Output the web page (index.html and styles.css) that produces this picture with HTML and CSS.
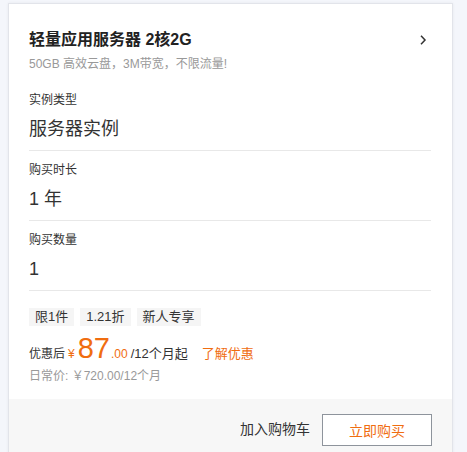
FILE: index.html
```html
<!DOCTYPE html>
<html lang="zh">
<head>
<meta charset="utf-8">
<link rel="stylesheet" href="styles.css">
</head>
<body>
<div class="card">
  <div class="body">
    <div class="head">
      <div class="title">轻量应用服务器 2核2G</div>
      <svg class="chev" width="10" height="12" viewBox="0 0 10 12"><path d="M3 1.8 L7 6 L3 10.2" fill="none" stroke="#333" stroke-width="1.5"/></svg>
    </div>
    <div class="sub">50GB 高效云盘，3M带宽，不限流量!</div>
    <div class="field first">
      <div class="label">实例类型</div>
      <div class="value">服务器实例</div>
    </div>
    <div class="field">
      <div class="label">购买时长</div>
      <div class="value">1 年</div>
    </div>
    <div class="field">
      <div class="label">购买数量</div>
      <div class="value">1</div>
    </div>
    <div class="tags">
      <span class="tag">限1件</span>
      <span class="tag">1.21折</span>
      <span class="tag">新人专享</span>
    </div>
    <div class="price">
      <span class="pl">优惠后</span>
      <span class="cur">¥</span>
      <span class="big">87</span>
      <span class="dec">.00</span>
      <span class="unit">/12个月起</span>
      <span class="more">了解优惠</span>
    </div>
    <div class="orig">日常价: ￥720.00/12个月</div>
  </div>
  <div class="foot">
    <span class="cart">加入购物车</span>
    <button class="buy">立即购买</button>
  </div>
</div>
</body>
</html>
```
FILE: styles.css
```css
html, body {
  margin: 0;
  padding: 0;
  background: #f4f6fb;
  font-family: "Liberation Sans", "Noto Sans CJK SC", sans-serif;
  color: #333;
  overflow: hidden;
}
body {
  padding: 3px 0 0 8px;
}
.card {
  width: 443px;
  background: #fff;
  border: 1px solid #e2e4ea;
  box-shadow: 0 0 3px rgba(0,0,0,0.06);
}
.body {
  padding: 25px 21px 0 20px;
}
.head {
  display: flex;
  align-items: center;
  justify-content: space-between;
  height: 22px;
}
.title {
  font-size: 16px;
  font-weight: bold;
  color: #222;
  line-height: 22px;
}
.chev {
  margin-right: 3px;
}
.sub {
  margin-top: 4px;
  font-size: 12px;
  line-height: 18px;
  color: #999;
}
.field {
  padding-top: 10px;
  padding-bottom: 8px;
  border-bottom: 1px solid #e8e8e8;
}
.field.first {
  padding-top: 18px;
}
.label {
  font-size: 12px;
  line-height: 18px;
  color: #333;
}
.value {
  margin-top: 7px;
  font-size: 18px;
  line-height: 26px;
  color: #333;
}
.tags {
  display: flex;
  gap: 6px;
  margin-top: 17px;
}
.tag {
  background: #f5f5f5;
  font-size: 13px;
  line-height: 18px;
  padding: 0 6px;
  color: #333;
}
.price {
  display: flex;
  align-items: baseline;
  margin-top: 5px;
  height: 34px;
  color: #333;
}
.pl { font-size: 12px; }
.cur { font-size: 12px; color: #f06d10; margin-left: 3px; }
.big { font-size: 29px; color: #f06d10; margin-left: 3px; line-height: 34px; }
.dec { font-size: 12px; color: #f06d10; margin-left: 1px; }
.unit { font-size: 13px; margin-left: 3px; }
.more { font-size: 13px; color: #f06d10; margin-left: 14px; }
.orig {
  margin-top: 2px;
  font-size: 12px;
  line-height: 18px;
  color: #999;
}
.foot {
  margin-top: 14px;
  background: #f7f7f7;
  height: 60px;
  display: flex;
  justify-content: flex-end;
  align-items: flex-start;
  padding: 15px 20px 0 0;
}
.cart {
  font-size: 14px;
  line-height: 31px;
  color: #333;
  margin-right: 12px;
}
.buy {
  width: 110px;
  height: 32px;
  background: #fff;
  border: 1px solid #8e949c;
  color: #f06d10;
  font-size: 14px;
  font-family: inherit;
  padding: 0;
}
```
